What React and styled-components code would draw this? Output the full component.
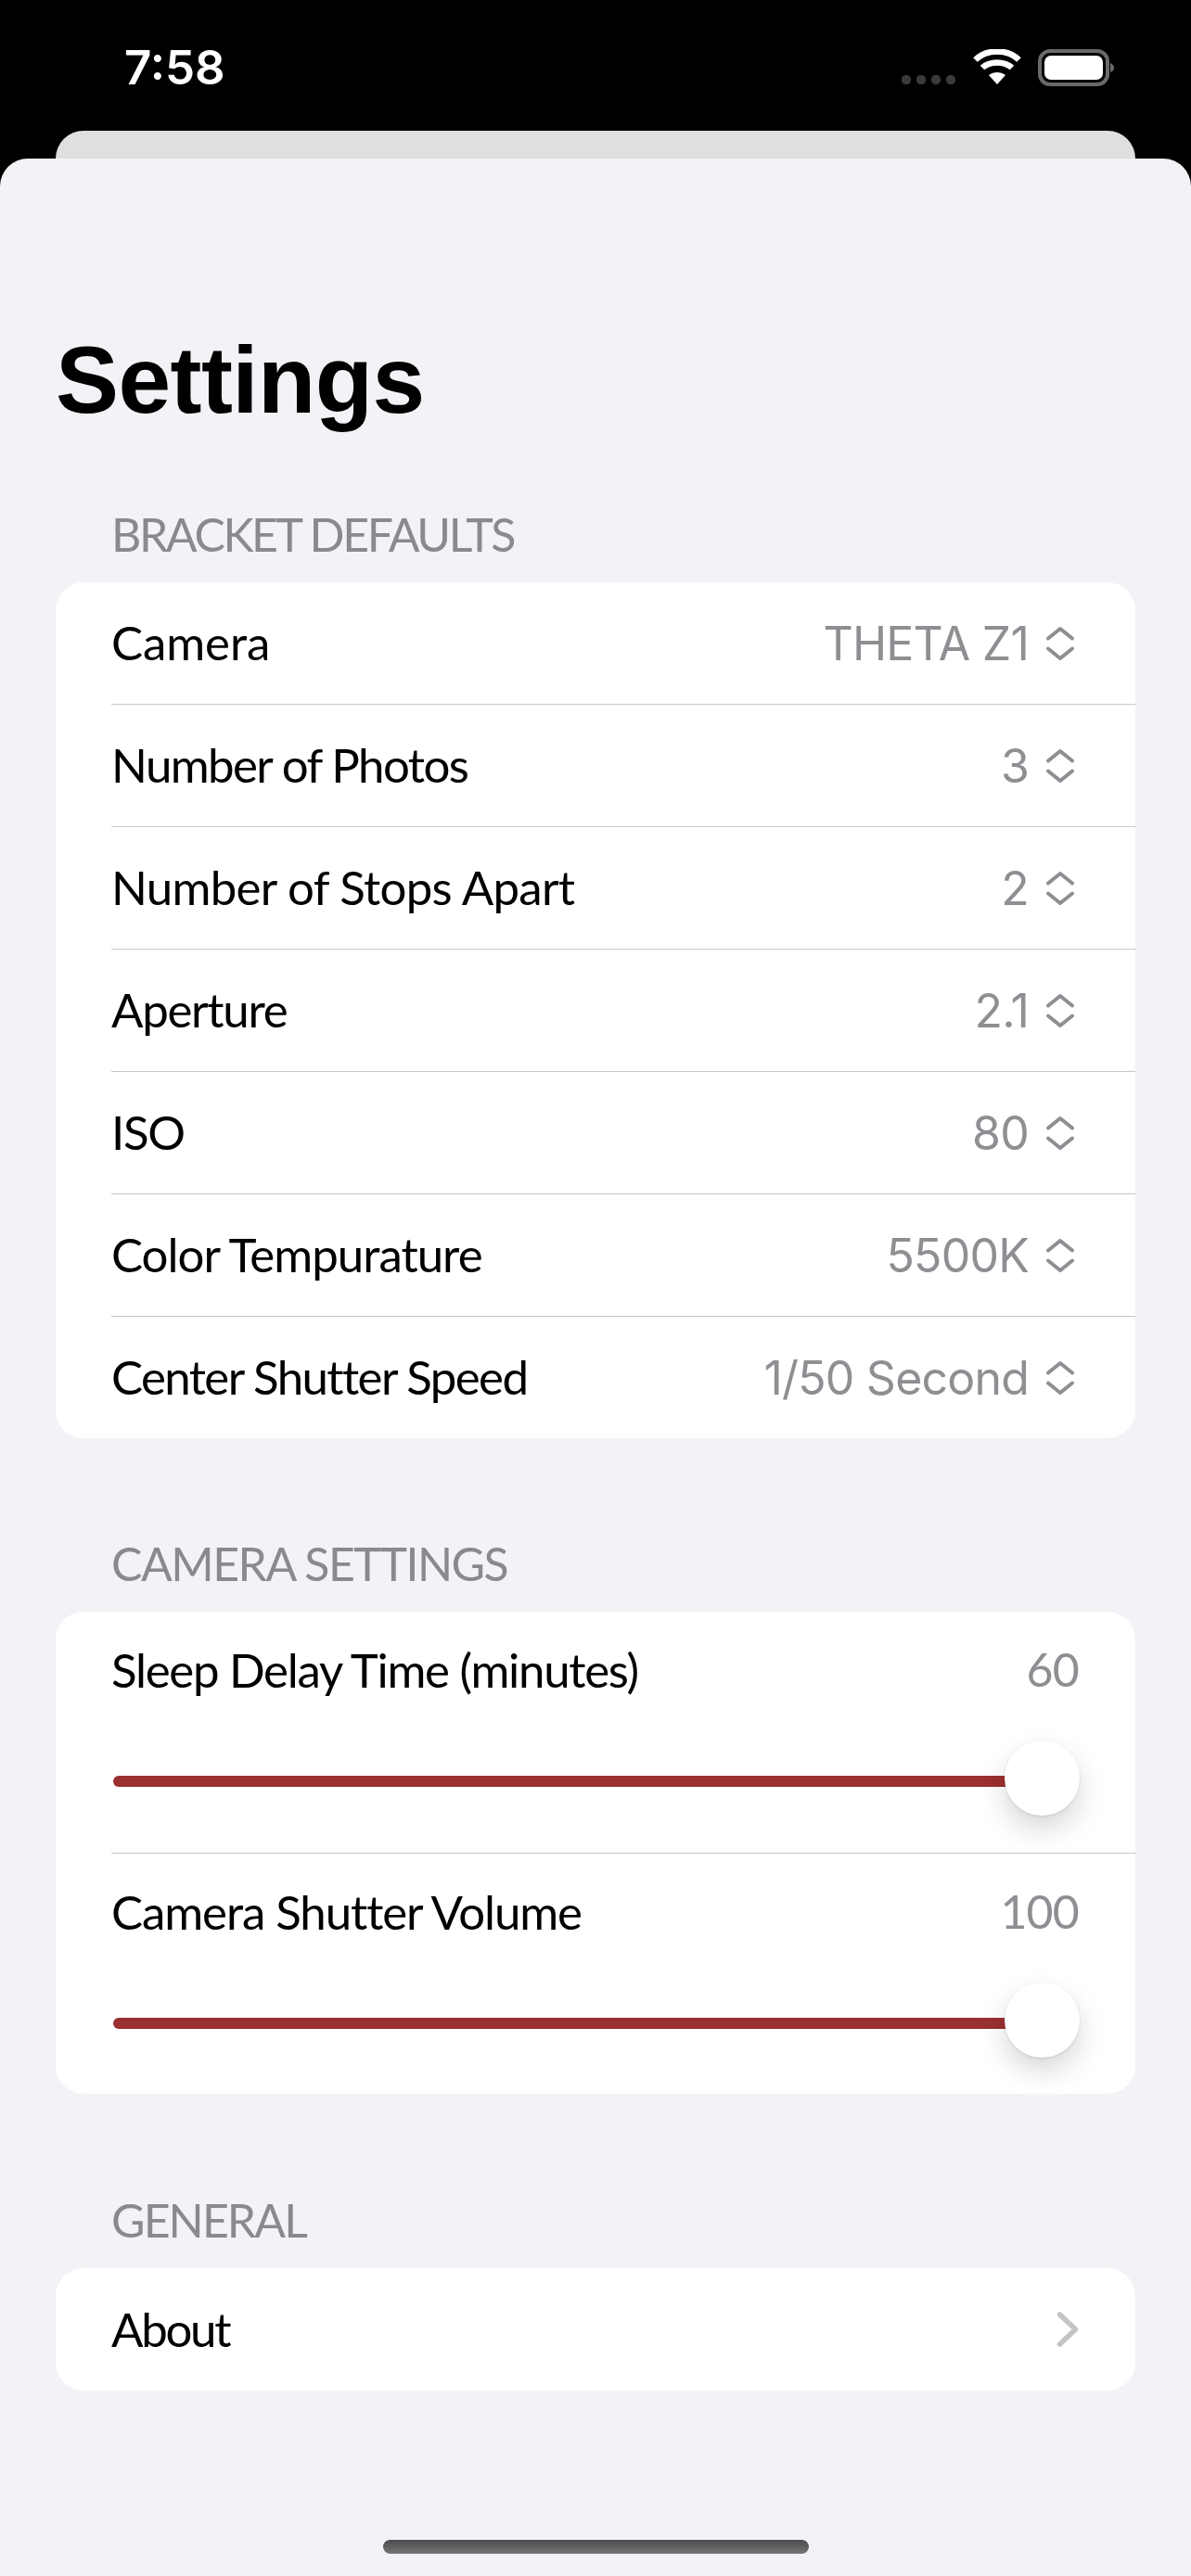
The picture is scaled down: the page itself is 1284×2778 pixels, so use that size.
import React from "react";
import styled, { createGlobalStyle } from "styled-components";

const Global = createGlobalStyle`
  html, body { margin: 0; padding: 0; background: #000; }
  #root { width: 1284px; height: 2778px; }
`;

const Screen = styled.div`
  width: 1284px;
  height: 2778px;
  background: #000;
  display: flex;
  flex-direction: column;
  overflow: hidden;
`;

const StatusBar = styled.div`
  height: 141px;
  box-sizing: border-box;
  padding: 45px 82px 0 134px;
  display: flex;
  justify-content: space-between;
  align-items: flex-start;
`;

const Time = styled.div`
  font-family: Inter, sans-serif;
  font-weight: 600;
  font-size: 51px;
  line-height: 56px;
  letter-spacing: 0;
  color: #fff;
`;

const StatusIcons = styled.svg`
  display: block;
  margin-top: 8px;
`;

const BackSheet = styled.div`
  height: 30px;
  margin: 0 60px;
  background: #dfdfdf;
  border-radius: 30px 30px 0 0;
`;

const Sheet = styled.div`
  flex: 1;
  background: #f2f2f7;
  border-radius: 30px 30px 0 0;
  display: flex;
  flex-direction: column;
  padding: 0 60px;
`;

const Title = styled.h1`
  margin: 178px 0 0;
  font-family: "Liberation Sans", Arial, sans-serif;
  font-weight: 700;
  font-size: 102px;
  line-height: 122px;
  letter-spacing: -0.6px;
  color: #000;
`;

const SectionHeader = styled.h2`
  margin: ${(p) => p.$top}px 0 0;
  padding-left: 60px;
  font-family: Lato, sans-serif;
  font-weight: 400;
  font-size: 50px;
  line-height: 60px;
  height: 60px;
  letter-spacing: ${(p) => p.$track}px;
  color: #8a8a8e;
  text-transform: uppercase;
`;

const Card = styled.div`
  margin-top: ${(p) => p.$top}px;
  background: #fff;
  border-radius: 30px;
  overflow: hidden;
`;

const Row = styled.div`
  height: ${(p) => p.$height}px;
  box-sizing: border-box;
  margin-left: 60px;
  padding-right: 61px;
  display: flex;
  align-items: center;
  justify-content: space-between;
  border-bottom: ${(p) => (p.$last ? "none" : "1.5px solid #c8c8ca")};
`;

const Label = styled.span`
  font-family: Lato, sans-serif;
  font-size: 51px;
  letter-spacing: ${(p) => p.$track}px;
  color: #000;
  padding-bottom: 2px;
`;

const ValueGroup = styled.div`
  display: flex;
  align-items: center;
  gap: 18px;
  padding-right: 4px;
`;

const Value = styled.span`
  font-family: Inter, sans-serif;
  font-size: 50px;
  letter-spacing: -0.8px;
  color: #8e8e93;
`;

const SliderRow = styled.div`
  height: ${(p) => p.$height}px;
  box-sizing: border-box;
  margin-left: 60px;
  padding: 0 61px 0 0;
  display: flex;
  flex-direction: column;
  border-bottom: ${(p) => (p.$last ? "none" : "1.5px solid #c8c8ca")};
`;

const SliderHead = styled.div`
  height: 126px;
  display: flex;
  align-items: center;
  justify-content: space-between;
`;

const SliderValue = styled.span`
  font-family: Lato, sans-serif;
  font-size: 50px;
  letter-spacing: -0.8px;
  color: #8e8e93;
  padding-bottom: 2px;
`;

const SliderBody = styled.div`
  height: 81px;
  margin-top: 13px;
  display: flex;
  align-items: center;
  padding-left: 2px;
`;

const Track = styled.div`
  flex: 1;
  height: 12px;
  margin-top: 7px;
  margin-right: -1px;
  background: #9b3030;
  border-radius: 6px 0 0 6px;
`;

const Thumb = styled.div`
  flex: none;
  width: 81px;
  height: 81px;
  margin-right: -1px;
  border-radius: 50%;
  background: #fff;
  box-shadow: 0 1px 3px rgba(0, 0, 0, 0.1), 0 14px 30px rgba(0, 0, 0, 0.16);
  position: relative;
`;

const HomeBar = styled.div`
  width: 459px;
  height: 15px;
  margin: auto auto 24px;
  border-radius: 8px;
  background: linear-gradient(#4b4b4d, #757577);
`;

const Updown = () => (
  <svg width="32" height="38" viewBox="0 0 32 38" fill="none" stroke="#8e8e93" strokeWidth="4" strokeLinecap="round" strokeLinejoin="round">
    <path d="M3 13.5 L16 3 L29 13.5" />
    <path d="M3 24.5 L16 35 L29 24.5" />
  </svg>
);

const Chevron = () => (
  <svg width="24" height="38" viewBox="0 0 24 38" fill="none" stroke="#c4c4c6" strokeWidth="5.5" strokeLinecap="round" strokeLinejoin="round" style={{ display: "block" }}>
    <path d="M3.5 3 L20.5 19 L3.5 35" />
  </svg>
);

const pickers = [
  ["Camera", "THETA Z1", -0.1],
  ["Number of Photos", "3", -1.6],
  ["Number of Stops Apart", "2", -0.7],
  ["Aperture", "2.1", -1.3],
  ["ISO", "80", -1.3],
  ["Color Tempurature", "5500K", -1],
  ["Center Shutter Speed", "1/50 Second", -1.6],
];

const sliders = [
  ["Sleep Delay Time (minutes)", "60", -1.3, 261],
  ["Camera Shutter Volume", "100", -1.1, 259],
];

export default function App() {
  return (
    <Screen>
      <Global />
      <StatusBar>
        <Time>7:58</Time>
        <StatusIcons width="230" height="42" viewBox="0 0 230 42">
          <g fill="#3a3a3a">
            <rect x="0" y="28" width="10" height="10" rx="4.5" />
            <rect x="16" y="28" width="10" height="10" rx="4.5" />
            <rect x="32" y="28" width="10" height="10" rx="4.5" />
            <rect x="48" y="28" width="10" height="10" rx="4.5" />
          </g>
          <g fill="none" stroke="#fff" strokeWidth="6.5">
            <path d="M79.5 11.5 C92 -0.5 114 -0.5 126.5 11.5" />
            <path d="M87 20 C95 12.5 111 12.5 119 20" />
          </g>
          <path d="M94 28 C99 24 107 24 112 28 L103 38 Z" fill="#fff" />
          <rect x="149" y="2" width="73" height="36" rx="11" fill="none" stroke="#6a6a6a" strokeWidth="4" />
          <rect x="154" y="7" width="63" height="26" rx="7" fill="#fff" />
          <path d="M225 15 C228 16 229 18 229 20 C229 22 228 24 225 25 Z" fill="#6a6a6a" />
        </StatusIcons>
      </StatusBar>
      <BackSheet />
      <Sheet>
        <Title>Settings</Title>
        <SectionHeader $top={75} $track={-2.4}>Bracket Defaults</SectionHeader>
        <Card $top={22}>
          {pickers.map(([l, v, t], i) => (
            <Row key={l} $height={i === pickers.length - 1 ? 131 : 132} $last={i === pickers.length - 1}>
              <Label $track={t}>{l}</Label>
              <ValueGroup>
                <Value>{v}</Value>
                <Updown />
              </ValueGroup>
            </Row>
          ))}
        </Card>
        <SectionHeader $top={105} $track={-1.5}>Camera Settings</SectionHeader>
        <Card $top={22}>
          {sliders.map(([l, v, t, h], i) => (
            <SliderRow key={l} $height={h} $last={i === sliders.length - 1}>
              <SliderHead>
                <Label $track={t}>{l}</Label>
                <SliderValue>{v}</SliderValue>
              </SliderHead>
              <SliderBody>
                <Track />
                <Thumb />
              </SliderBody>
            </SliderRow>
          ))}
        </Card>
        <SectionHeader $top={106} $track={-1.9}>General</SectionHeader>
        <Card $top={22}>
          <Row $height={132} $last>
            <Label $track={-2.3}>About</Label>
            <Chevron />
          </Row>
        </Card>
        <HomeBar />
      </Sheet>
    </Screen>
  );
}
